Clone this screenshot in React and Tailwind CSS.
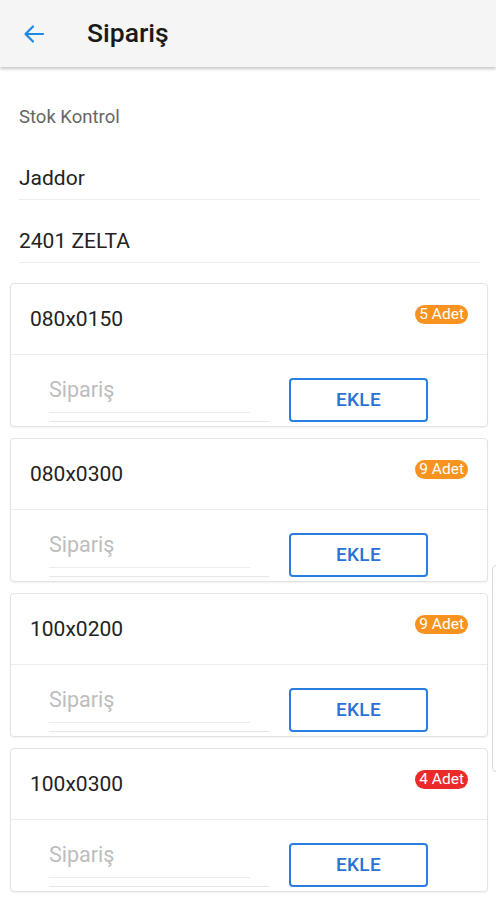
import React from "react";

const items = [
  { code: "080x0150", qty: "5 Adet", color: "bg-[#f7931e]" },
  { code: "080x0300", qty: "9 Adet", color: "bg-[#f7931e]" },
  { code: "100x0200", qty: "9 Adet", color: "bg-[#f7931e]" },
  { code: "100x0300", qty: "4 Adet", color: "bg-[#ec2a2a]" },
];

function Card({ code, qty, color }) {
  return (
    <div className="h-[144px] rounded-[4px] border border-[#e3e3e3] bg-white shadow-[0_1px_2px_rgba(0,0,0,0.06)] flex flex-col">
      <div className="h-[71px] flex items-center justify-between pl-[19px] pr-[19px] border-b border-[#ececec]">
        <span className="text-[21px] text-[#222] leading-none mt-[1px]">{code}</span>
        <span className={`${color} text-white text-[15.5px] leading-[19px] h-[19px] px-[4px] rounded-full -mt-[10px]`}>{qty}</span>
      </div>
      <div className="flex-1 flex pl-[38px] pr-[59px]">
        <div className="w-[220px] flex flex-col">
          <span className="text-[21.5px] text-[#bdbdbd] leading-[26px] mt-[22px]">Sipariş</span>
          <div className="mt-[9px] h-px w-[201px] bg-[#ececec]" />
          <div className="mt-[8px] h-px w-[220px] bg-[#e6e6e6]" />
        </div>
        <div className="ml-auto mt-[23px] w-[139px] h-[44px] rounded-[4px] border-2 border-[#2a7de1] flex items-center justify-center">
          <span className="text-[#2a72d6] text-[19px] font-medium tracking-[0.3px]">EKLE</span>
        </div>
      </div>
    </div>
  );
}

export default function App() {
  return (
    <div className="relative w-[496px] h-[900px] overflow-hidden bg-white" style={{ fontFamily: "Roboto, 'Noto Sans', sans-serif" }}>
      <div className="h-[67px] bg-[#f5f5f5] flex items-center shadow-[0_2px_3px_rgba(0,0,0,0.22)] relative z-10">
        <svg className="ml-[22px]" width="24" height="24" viewBox="0 0 24 24" fill="none" stroke="#1e88e5" strokeWidth="2.2" strokeLinecap="round" strokeLinejoin="round">
          <path d="M21 12H3.5M11 4.5L3.5 12l7.5 7.5" />
        </svg>
        <span className="ml-[41px] text-[26.5px] font-medium text-[#1a1a1a] leading-none">Sipariş</span>
      </div>
      <div className="pl-[19px] pr-[16px]">
        <div className="mt-[39px] h-[22px] text-[18.5px] leading-[22px] text-[#666]">Stok Kontrol</div>
        <div className="mt-[32px] h-[40px] pt-[5px] border-b border-[#ececec]">
          <span className="text-[21px] leading-[26px] text-[#222]">Jaddor</span>
        </div>
        <div className="mt-[23px] h-[40px] pt-[5px] border-b border-[#ececec]">
          <span className="text-[21px] leading-[26px] text-[#222]">2401 ZELTA</span>
        </div>
      </div>
      <div className="mt-[20px] ml-[10px] mr-[8px] flex flex-col gap-[11px]">
        {items.map((it) => (
          <Card key={it.code} {...it} />
        ))}
      </div>
      <div className="absolute left-[492px] top-[565px] w-[10px] h-[207px] border border-[#dcdcdc] rounded-[4px] bg-white" />
    </div>
  );
}
